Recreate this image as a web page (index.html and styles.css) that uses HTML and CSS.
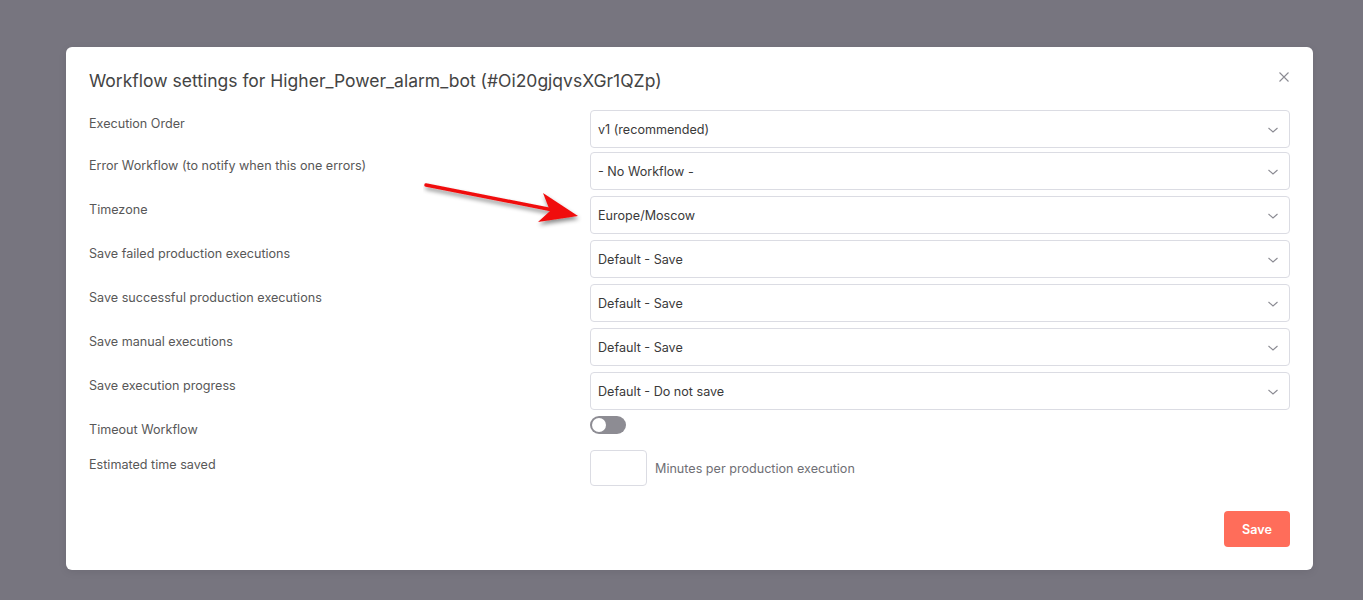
FILE: index.html
```html
<!DOCTYPE html>
<html>
<head>
<meta charset="utf-8">
<link rel="stylesheet" href="styles.css">
</head>
<body>
<div class="backdrop">
  <div class="modal">
    <div class="header">
      <h1 class="title">Workflow settings for Higher_Power_alarm_bot (#Oi20gjqvsXGr1QZp)</h1>
      <svg class="close" width="12" height="12" viewBox="0 0 12 12"><path d="M1.5 1.5L10.5 10.5M10.5 1.5L1.5 10.5" stroke="#8b8b93" stroke-width="1.1" fill="none"/></svg>
    </div>
    <div class="rows">
      <div class="row row-first"><div class="label">Execution Order</div><div class="field"><div class="select"><span>v1 (recommended)</span><svg class="chev" width="12" height="8" viewBox="0 0 12 8"><path d="M1.5 2L6 6L10.5 2" stroke="#8a8a92" stroke-width="1.1" fill="none"/></svg></div></div></div>
      <div class="row"><div class="label">Error Workflow (to notify when this one errors)</div><div class="field"><div class="select"><span>- No Workflow -</span><svg class="chev" width="12" height="8" viewBox="0 0 12 8"><path d="M1.5 2L6 6L10.5 2" stroke="#8a8a92" stroke-width="1.1" fill="none"/></svg></div></div></div>
      <div class="row"><div class="label">Timezone</div><div class="field"><div class="select"><span>Europe/Moscow</span><svg class="chev" width="12" height="8" viewBox="0 0 12 8"><path d="M1.5 2L6 6L10.5 2" stroke="#8a8a92" stroke-width="1.1" fill="none"/></svg></div></div></div>
      <div class="row"><div class="label">Save failed production executions</div><div class="field"><div class="select"><span>Default - Save</span><svg class="chev" width="12" height="8" viewBox="0 0 12 8"><path d="M1.5 2L6 6L10.5 2" stroke="#8a8a92" stroke-width="1.1" fill="none"/></svg></div></div></div>
      <div class="row"><div class="label">Save successful production executions</div><div class="field"><div class="select"><span>Default - Save</span><svg class="chev" width="12" height="8" viewBox="0 0 12 8"><path d="M1.5 2L6 6L10.5 2" stroke="#8a8a92" stroke-width="1.1" fill="none"/></svg></div></div></div>
      <div class="row"><div class="label">Save manual executions</div><div class="field"><div class="select"><span>Default - Save</span><svg class="chev" width="12" height="8" viewBox="0 0 12 8"><path d="M1.5 2L6 6L10.5 2" stroke="#8a8a92" stroke-width="1.1" fill="none"/></svg></div></div></div>
      <div class="row"><div class="label">Save execution progress</div><div class="field"><div class="select"><span>Default - Do not save</span><svg class="chev" width="12" height="8" viewBox="0 0 12 8"><path d="M1.5 2L6 6L10.5 2" stroke="#8a8a92" stroke-width="1.1" fill="none"/></svg></div></div></div>
      <div class="row row-toggle"><div class="label">Timeout Workflow</div><div class="field"><div class="toggle"><div class="knob"></div></div></div></div>
      <div class="row row-est"><div class="label">Estimated time saved</div><div class="field field-est"><div class="numbox"></div><span class="hint">Minutes per production execution</span></div></div>
    </div>
    <div class="footer"><button class="save">Save</button></div>
  </div>
  <svg class="arrow" width="180" height="60" viewBox="0 0 180 60">
    <defs>
      <filter id="sh" x="-20%" y="-50%" width="140%" height="200%">
        <feDropShadow dx="1" dy="3" stdDeviation="2" flood-color="#000" flood-opacity="0.45"/>
      </filter>
    </defs>
    <g filter="url(#sh)">
      <path d="M3 10 L130 35" stroke="#f01010" stroke-width="3.5" stroke-linecap="round" fill="none"/>
      <path d="M120 18 L155 41 L115 47 L127 36 Z" fill="#f01010"/>
    </g>
  </svg>
</div>
</body>
</html>
```
FILE: styles.css
```css
html, body {
  margin: 0;
  padding: 0;
}
body {
  font-family: Inter, "Open Sans", "Liberation Sans", sans-serif;
  background: #77757f;
  width: 1363px;
  height: 600px;
  overflow: hidden;
}
.backdrop {
  position: relative;
  padding-top: 47px;
  padding-left: 66px;
  height: 553px;
}
.modal {
  width: 1201px;
  background: #fff;
  border-radius: 6px;
  padding: 20px 23px 23px 23px;
  box-shadow: 0 2px 8px rgba(0,0,0,0.08);
}
.header {
  display: flex;
  justify-content: space-between;
  align-items: flex-start;
  height: 43px;
}
.title {
  margin: 0;
  font-size: 17.5px;
  font-weight: 400;
  color: #444;
  line-height: 26px;
  padding-top: 1px;
}
.close {
  margin-top: 4px;
  margin-right: 0px;
}
.rows {
  display: flex;
  flex-direction: column;
}
.row {
  display: flex;
  height: 38px;
  margin-bottom: 6px;
}
.row-first {
  margin-bottom: 4px;
}
.label {
  width: 501px;
  flex: none;
  font-size: 12.6px;
  color: #585858;
  line-height: 16px;
  padding-top: 6px;
}
.field {
  flex: 1;
}
.select {
  height: 36px;
  border: 1px solid #dbdce3;
  border-radius: 4px;
  display: flex;
  align-items: center;
  justify-content: space-between;
  padding: 0 10px 0 7px;
  font-size: 12.6px;
  color: #3a3a3a;
}
.chev {
  margin-top: 1px;
}
.row-toggle {
  height: 28px;
  margin-bottom: 6px;
}
.row-toggle .label {
  padding-top: 6px;
}
.toggle {
  width: 36px;
  height: 18px;
  border-radius: 9px;
  background: #8d8c93;
  margin-top: 0px;
  position: relative;
}
.knob {
  position: absolute;
  left: 2px;
  top: 2px;
  width: 14px;
  height: 14px;
  border-radius: 50%;
  background: #fff;
}
.row-est {
  height: 36px;
  margin-bottom: 0;
}
.row-est .label {
  padding-top: 7px;
}
.field-est {
  display: flex;
  align-items: center;
}
.numbox {
  width: 55px;
  height: 34px;
  border: 1px solid #dbdce3;
  border-radius: 4px;
  margin-right: 8px;
}
.hint {
  font-size: 12.6px;
  color: #6f6f75;
}
.footer {
  display: flex;
  justify-content: flex-end;
  margin-top: 25px;
}
.save {
  width: 66px;
  height: 36px;
  border: none;
  border-radius: 4px;
  background: #ff6d5a;
  color: #fff;
  font-family: Inter, "Open Sans", "Liberation Sans", sans-serif;
  font-size: 12.6px;
  font-weight: 600;
}
.arrow {
  position: absolute;
  left: 423px;
  top: 175px;
}
```
